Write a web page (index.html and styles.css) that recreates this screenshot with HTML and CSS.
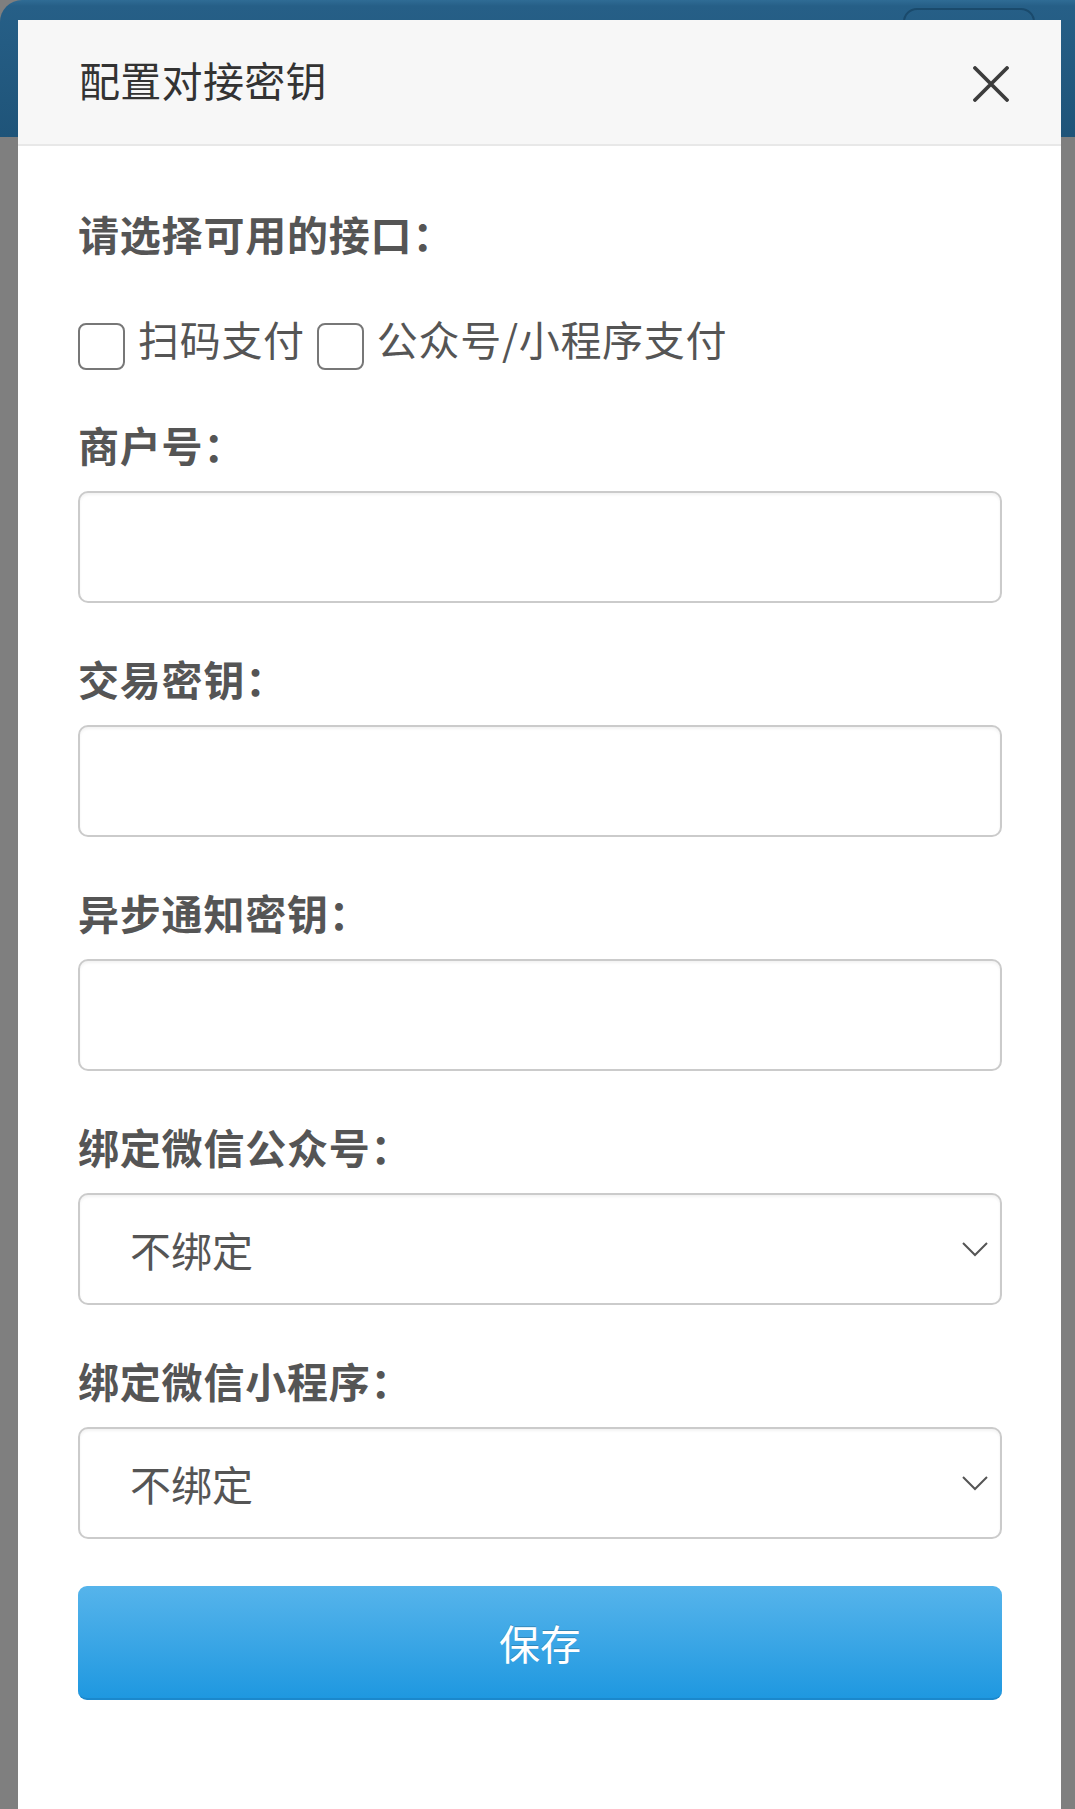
FILE: index.html
```html
<!DOCTYPE html>
<html lang="zh-CN">
<head>
<meta charset="utf-8">
<title>配置对接密钥</title>
<link rel="stylesheet" href="styles.css">
</head>
<body>
<div class="page">
  <div class="topbar"><span class="topbar-btn"></span></div>
  <div class="backdrop"></div>
</div>
<div class="modal">
  <div class="modal-header">
    <h2 class="modal-title">配置对接密钥</h2>
    <button class="close" type="button" aria-label="关闭">
      <svg width="36" height="36" viewBox="0 0 36 36"><path d="M2 2 L34 34 M34 2 L2 34" stroke="#3c3c3c" stroke-width="3.8" stroke-linecap="round" fill="none"/></svg>
    </button>
  </div>
  <form class="modal-body">
    <div class="label">请选择可用的接口：</div>
    <div class="check-row">
      <label class="check"><input type="checkbox"><span>扫码支付</span></label>
      <label class="check"><input type="checkbox"><span>公众号/小程序支付</span></label>
    </div>
    <div class="group">
      <div class="label">商户号：</div>
      <input class="field" type="text">
    </div>
    <div class="group">
      <div class="label">交易密钥：</div>
      <input class="field" type="text">
    </div>
    <div class="group">
      <div class="label">异步通知密钥：</div>
      <input class="field" type="text">
    </div>
    <div class="group">
      <div class="label">绑定微信公众号：</div>
      <div class="field select"><span>不绑定</span>
        <svg width="26" height="16" viewBox="0 0 26 16"><path d="M1 2 L13 14 L25 2" stroke="#555" stroke-width="2" fill="none"/></svg>
      </div>
    </div>
    <div class="group">
      <div class="label">绑定微信小程序：</div>
      <div class="field select"><span>不绑定</span>
        <svg width="26" height="16" viewBox="0 0 26 16"><path d="M1 2 L13 14 L25 2" stroke="#555" stroke-width="2" fill="none"/></svg>
      </div>
    </div>
    <button class="save" type="button">保存</button>
  </form>
</div>
</body>
</html>
```
FILE: styles.css
```css
html, body {
  margin: 0;
  padding: 0;
  height: 100%;
}
body {
  font-family: "Noto Sans CJK SC", "Noto Sans", sans-serif;
  background: #7f7f7f;
  overflow: hidden;
  position: relative;
}
.page {
  height: 1809px;
  display: flex;
  flex-direction: column;
}
.topbar {
  height: 137px;
  background: linear-gradient(#2f6c95 0, #265f87 6px, #1f5479 100%);
  border-top-left-radius: 22px;
  display: flex;
  justify-content: flex-end;
  align-items: flex-start;
  padding: 8px 40px 0 0;
  box-sizing: border-box;
}
.topbar-btn {
  width: 128px;
  height: 60px;
  border: 2px solid #1a4a6c;
  border-radius: 14px;
}
.backdrop {
  flex: 1;
  background: #7f7f7f;
}
.modal {
  position: absolute;
  top: 20px;
  left: 18px;
  width: 1043px;
  bottom: 0;
  background: #fff;
}
.modal-header {
  height: 124px;
  background: #f7f7f7;
  border-bottom: 2px solid #e8e8e8;
  display: flex;
  align-items: center;
  justify-content: space-between;
  padding: 0 52px 0 61px;
}
.modal-title {
  margin: 0 0 6px;
  font-size: 41px;
  font-weight: 400;
  color: #333;
  line-height: 56px;
  letter-spacing: 0.3px;
}
.close {
  border: 0;
  background: none;
  padding: 0;
  margin-top: 4px;
  width: 36px;
  height: 36px;
  display: flex;
}
.modal-body {
  padding: 59px 59px 0 60px;
  display: flex;
  flex-direction: column;
}
.label {
  font-size: 41px;
  font-weight: 700;
  line-height: 56px;
  color: #555;
  margin-bottom: 19px;
  letter-spacing: 0.8px;
}
.check-row {
  display: flex;
  gap: 12px;
  margin-top: 30px;
  margin-bottom: 46px;
}
.check {
  display: flex;
  align-items: flex-start;
  gap: 13px;
  font-size: 41px;
  line-height: 56px;
  color: #555;
  letter-spacing: 0.7px;
}
.check input {
  appearance: none;
  -webkit-appearance: none;
  margin: 13px 0 0;
  width: 47px;
  height: 47px;
  border: 2.5px solid #777;
  border-radius: 8px;
  background: #fff;
  box-sizing: border-box;
}
.group {
  display: flex;
  flex-direction: column;
  margin-bottom: 47px;
}
.field {
  height: 112px;
  box-sizing: border-box;
  border: 2px solid #cbcbcb;
  border-radius: 10px;
  background: #fff;
  box-shadow: inset 0 2px 3px rgba(0,0,0,0.05);
  font-family: inherit;
  font-size: 41px;
  margin: 0;
}
.select {
  display: flex;
  align-items: center;
  justify-content: space-between;
  padding: 0 12px 0 50px;
  color: #555;
}
.select span {
  line-height: 56px;
}
.save {
  height: 114px;
  border: 0;
  border-bottom: 2px solid #1b88cc;
  border-radius: 9px;
  background: linear-gradient(#56b4eb, #1f98e0);
  color: #fff;
  font-family: inherit;
  font-size: 41px;
  text-shadow: 0 -1px 0 rgba(0,0,0,0.2);
  padding: 0;
}
```
